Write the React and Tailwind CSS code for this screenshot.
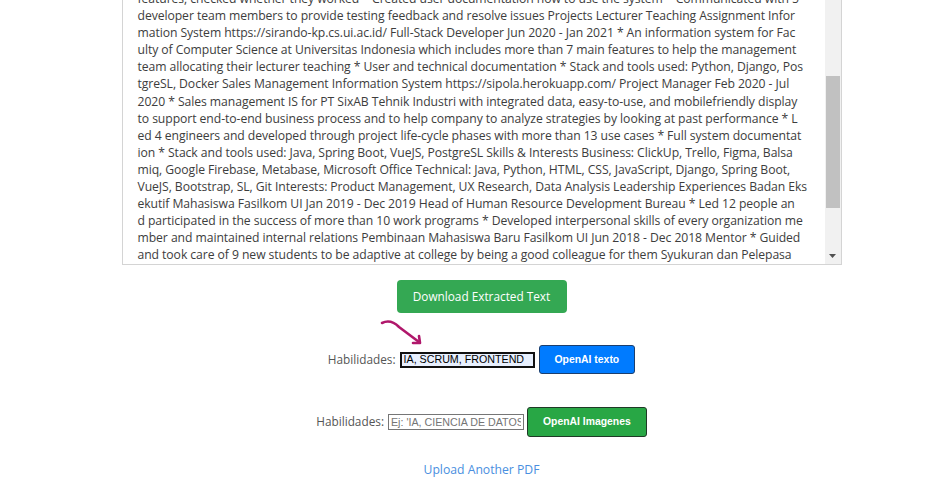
import React from 'react';

const extractedLines = [
  'Andi Pratama Jakarta, Indonesia | andi.pratama@gmail.com | linkedin.com/in/andipratama Summary Product-minded softwa',
  're engineer with experience leading small teams and delivering web information systems for academic and business use',
  'rs Education Universitas Indonesia Aug 2017 - Jul 2021 Bachelor of Computer Science GPA 3.71/4.00 Experiences Trave',
  'loka Software Engineer Intern Jun 2020 - Aug 2020 * Built internal dashboards for the operations team using React and',
  'Spring Boot * Wrote unit and integration tests for booking services Kompas Gramedia Quality Assurance Intern Dec 2019',
  '- Feb 2020 * Designed test scenarios for more than 40 user stories and reported defects to the development team * Autom',
  'ated regression tests for the mobile application Teaching Assistant Fasilkom UI Feb 2019 - Jun 2020 * Assisted more th',
  'an 150 students in Software Engineering and Web Programming courses * Reviewed assignments and gave weekly feedback Pr',
  'ojects Student Internship Portal Quality Assurance Engineer Sep 2019 - Dec 2019 * Tested more than 10 main modules and',
  'their features, created test plans for each sprint * Verified that user flows matched the agreed acceptance criteria *',
  'features, checked whether they worked * Created user documentation how to use the system * Communicated with 5',
  'developer team members to provide testing feedback and resolve issues Projects Lecturer Teaching Assignment Infor',
  'mation System https://sirando-kp.cs.ui.ac.id/ Full-Stack Developer Jun 2020 - Jan 2021 * An information system for Fac',
  'ulty of Computer Science at Universitas Indonesia which includes more than 7 main features to help the management',
  'team allocating their lecturer teaching * User and technical documentation * Stack and tools used: Python, Django, Pos',
  'tgreSL, Docker Sales Management Information System https://sipola.herokuapp.com/ Project Manager Feb 2020 - Jul',
  '2020 * Sales management IS for PT SixAB Tehnik Industri with integrated data, easy-to-use, and mobilefriendly display',
  'to support end-to-end business process and to help company to analyze strategies by looking at past performance * L',
  'ed 4 engineers and developed through project life-cycle phases with more than 13 use cases * Full system documentat',
  'ion * Stack and tools used: Java, Spring Boot, VueJS, PostgreSL Skills & Interests Business: ClickUp, Trello, Figma, Balsa',
  'miq, Google Firebase, Metabase, Microsoft Office Technical: Java, Python, HTML, CSS, JavaScript, Django, Spring Boot,',
  'VueJS, Bootstrap, SL, Git Interests: Product Management, UX Research, Data Analysis Leadership Experiences Badan Eks',
  'ekutif Mahasiswa Fasilkom UI Jan 2019 - Dec 2019 Head of Human Resource Development Bureau * Led 12 people an',
  'd participated in the success of more than 10 work programs * Developed interpersonal skills of every organization me',
  'mber and maintained internal relations Pembinaan Mahasiswa Baru Fasilkom UI Jun 2018 - Dec 2018 Mentor * Guided',
  'and took care of 9 new students to be adaptive at college by being a good colleague for them Syukuran dan Pelepasa',
  'n Wisudawan Fasilkom UI Aug 2019 - Sep 2019 Person in Charge of Logistics * Managed event equipment and venue for',
  'more than 300 guests * Coordinated 8 staff members to prepare the graduation celebration on schedule Awards Gemastik',
  'XII Finalist Software Development Category 2019 * Built a web platform to connect local farmers with buyers Languages',
  'Indonesian (native), English (professional working proficiency)',
];

export default function App() {
  // the textarea is shown scrolled down, as in the captured page
  const keepScrolled = (el) => {
    if (el) el.scrollTop = 177;
  };

  return (
    <div className="h-[495px] overflow-hidden bg-white flex flex-col justify-end pl-[21px] font-['Open_Sans',sans-serif]">
      <div className="shrink-0 flex flex-col items-center pb-[15px]">
        <div className="w-[720px] h-[285px] shrink-0 flex border border-[#d4d4d4]">
          <textarea
            ref={keepScrolled}
            readOnly
            wrap="off"
            value={extractedLines.join('\n')}
            className="flex-1 h-full resize-none px-[15px] py-[15px] font-['Open_Sans',sans-serif] text-[12.2px] tracking-[-0.07px] leading-[17.1px] text-[#3d3d3d] whitespace-pre overflow-hidden outline-none"
          />
          {/* scrollbar */}
          <div className="w-[16px] h-full bg-[#f1f1f1] flex flex-col">
            <div className="h-[95px]" />
            <div className="mx-[1px] h-[132px] bg-[#c1c1c1]" />
            <div className="flex-1" />
            <div className="h-[17px] flex items-center justify-center">
              <svg width="7" height="4" viewBox="0 0 7 4">
                <path d="M0 0 L7 0 L3.5 4 Z" fill="#505050" />
              </svg>
            </div>
          </div>
        </div>

        <button className="mt-[15px] h-[33px] w-[170px] rounded-[4px] bg-[#34a853] text-white text-[11.8px]">
          Download Extracted Text
        </button>

        <div className="mt-[32px] h-[29px] flex items-center">
          <span className="text-[11.8px] text-[#555]">Habilidades:</span>
          <span className="relative ml-[4px] flex">
            <svg
              className="absolute left-[-22px] top-[-36px]"
              width="48"
              height="32"
              viewBox="0 0 48 32"
              fill="none"
              stroke="#b0176b"
              strokeWidth="2.6"
              strokeLinecap="round"
              strokeLinejoin="round"
            >
              <path d="M4 7 C10 4 15 5 21 11 L41 26" />
              <path d="M35 27 L42 27 L41 20" />
            </svg>
            <input
              readOnly
              value="IA, SCRUM, FRONTEND"
              className="w-[135px] h-[16px] border-2 border-[#111] bg-[#e8f0fe] px-[2px] font-['Liberation_Sans',Arial,sans-serif] text-[10.7px] text-black outline-none"
            />
          </span>
          <button className="ml-[4px] h-[29px] px-[15px] rounded-[3px] border border-[#1c3f6e] bg-[#007bff] font-['Liberation_Sans',Arial,sans-serif] text-[10.4px] font-bold text-white">
            OpenAI texto
          </button>
        </div>

        <div className="mt-[33px] h-[30px] flex items-center">
          <span className="text-[11.8px] text-[#555]">Habilidades:</span>
          <input
            placeholder="Ej: 'IA, CIENCIA DE DATOS'"
            className="ml-[4px] w-[136px] h-[16px] border border-[#767676] bg-white px-[2px] font-['Liberation_Sans',Arial,sans-serif] text-[10.7px] text-black placeholder:text-[#757575] outline-none"
          />
          <button className="ml-[3px] h-[30px] px-[15px] rounded-[3px] border border-[#1f3a26] bg-[#28a745] font-['Liberation_Sans',Arial,sans-serif] text-[10.4px] font-bold text-white">
            OpenAI Imagenes
          </button>
        </div>

        <a href="#" className="mt-[23px] block leading-[20px] text-[12.2px] text-[#4a8fe0]">
          Upload Another PDF
        </a>
      </div>
    </div>
  );
}
